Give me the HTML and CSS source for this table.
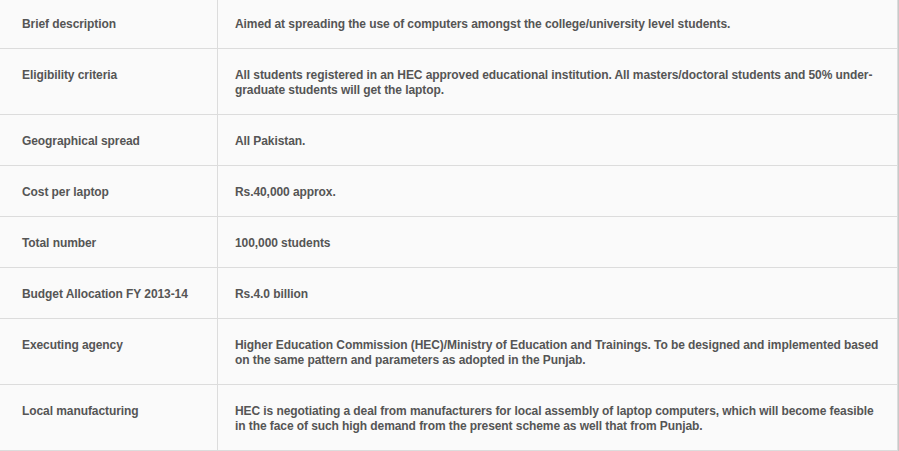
FILE: index.html
```html
<!DOCTYPE html>
<html>
<head>
<meta charset="utf-8">
<link rel="stylesheet" href="styles.css">
</head>
<body>
<table class="info">
  <tr><td class="key">Brief description</td><td class="val">Aimed at spreading the use of computers amongst the college/university level students.</td></tr>
  <tr><td class="key">Eligibility criteria</td><td class="val">All students registered in an HEC approved educational institution. All masters/doctoral students and 50% under-graduate students will get the laptop.</td></tr>
  <tr><td class="key">Geographical spread</td><td class="val">All Pakistan.</td></tr>
  <tr><td class="key">Cost per laptop</td><td class="val">Rs.40,000 approx.</td></tr>
  <tr><td class="key">Total number</td><td class="val">100,000 students</td></tr>
  <tr><td class="key">Budget Allocation FY 2013-14</td><td class="val">Rs.4.0 billion</td></tr>
  <tr><td class="key">Executing agency</td><td class="val">Higher Education Commission (HEC)/Ministry of Education and Trainings. To be designed and implemented based on the same pattern and parameters as adopted in the Punjab.</td></tr>
  <tr><td class="key">Local manufacturing</td><td class="val">HEC is negotiating a deal from manufacturers for local assembly of laptop computers, which will become feasible in the face of such high demand from the present scheme as well that from Punjab.</td></tr>
</table>
</body>
</html>
```
FILE: styles.css
```css
html, body {
  margin: 0;
  padding: 0;
  background: #ffffff;
}
.info {
  width: 898px;
  margin-top: -2px;
  border-collapse: collapse;
  background: #fafafa;
  border-right: 1px solid #dcdcdc;
  border-bottom: 1px solid #dcdcdc;
  box-shadow: 1px 1px 0 #c8c8c8;
  font-family: "Liberation Sans", Arial, sans-serif;
  font-size: 12px;
  font-weight: bold;
  line-height: 15px;
  letter-spacing: -0.08px;
  color: #555555;
}
.info td {
  vertical-align: top;
  padding: 19px 10px 16px 17px;
  border-bottom: 1px solid #dcdcdc;
}
.info td.key {
  width: 178px;
  padding-left: 22px;
  padding-right: 17px;
  border-right: 1px solid #dcdcdc;
}
```
